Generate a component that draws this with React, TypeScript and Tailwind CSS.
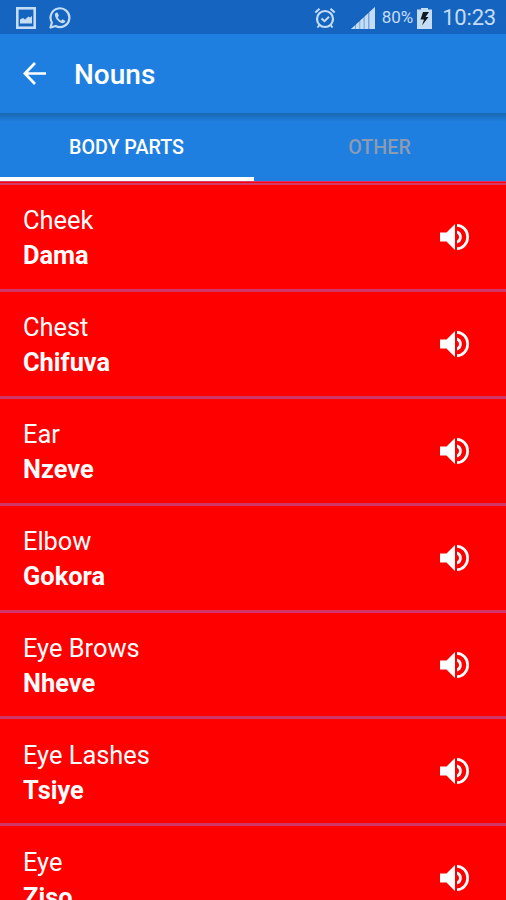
import React from 'react';

const words = [
  { english: 'Cheek', shona: 'Dama' },
  { english: 'Chest', shona: 'Chifuva' },
  { english: 'Ear', shona: 'Nzeve' },
  { english: 'Elbow', shona: 'Gokora' },
  { english: 'Eye Brows', shona: 'Nheve' },
  { english: 'Eye Lashes', shona: 'Tsiye' },
  { english: 'Eye', shona: 'Ziso' },
];

const StatusBar = () => (
  <div className="h-[34px] shrink-0 bg-[#1565c0] flex items-center pl-4 pr-[10px] pt-px text-[#c5dcf5]">
    {/* Screenshot notification */}
    <svg className="w-5 h-[22px]" viewBox="0 0 20 22" fill="none">
      <rect x="1.3" y="1.3" width="17.4" height="19.4" stroke="currentColor" strokeWidth="2.6" />
      <path d="M4 16.500v-4l3-1.500 2 1.500 3.500-3 1.500 1 2-1.500v7.500z" fill="currentColor" />
    </svg>
    {/* WhatsApp */}
    <svg className="w-[22px] h-[22px] ml-[13px]" viewBox="0 0 22 22" fill="none">
      <path
        d="M1.500 20.500l1.400-5A9.400 9.400 0 1 1 6.600 19z"
        stroke="currentColor"
        strokeWidth="2.2"
        strokeLinejoin="round"
      />
      <path
        d="M7.400 5.500c-1.200.6-1.800 1.900-1.400 3.300.8 3.500 3.400 6.200 6.900 7.400 1.700.3 3-.6 3.500-2.200l-2.900-1.700-1.400 1.400c-1.700-.8-2.700-1.900-3.400-3.500l1.200-1.400-1.300-3.100z"
        fill="currentColor"
      />
    </svg>
    {/* Alarm */}
    <svg className="w-[22px] h-[22px] ml-auto" viewBox="0 0 22 22" fill="none" stroke="currentColor">
      <circle cx="11" cy="12" r="8" strokeWidth="2.2" />
      <path
        d="M7.500 11.500l3 2.700 4.500-4.400M1.300 5.500l4.200-3.800M20.700 5.500l-4.200-3.800M5.500 18l-2 2.500M16.500 18l2 2.500"
        strokeWidth="2"
      />
    </svg>
    {/* Signal */}
    <svg className="w-6 h-[22px] ml-[15px]" viewBox="0 0 24 22" fill="currentColor">
      <path d="M0 22l24-22v22z" opacity="0.55" />
      <path d="M0 22l4-3.600V22zM5 17.400l3.300-3V22H5zM9.300 13.500l3.300-3V22H9.300zM13.700 9.500l3.300-3V22h-3.300zM18.500 5.100l5.500-5V22h-5.500z" />
    </svg>
    <span className="ml-[7px] text-[17px] leading-none">80%</span>
    {/* Battery */}
    <svg className="w-[15px] h-[22px] ml-1" viewBox="0 0 15 22">
      <path d="M4 1h7v1.500h4V22H0V2.500h4z" fill="currentColor" />
      <path d="M6 5L3.500 12.500H7L5 18.500l6.500-8.500H8.500L12 5z" fill="#101820" />
    </svg>
    <span className="ml-[10px] text-[22px] leading-none tracking-[-0.2px]">10:23</span>
  </div>
);

const VolumeIcon = () => (
  <svg className="w-[29px] h-[26px]" viewBox="0 0 29 26" fill="white">
    <path d="M0 8.500h6.500L15 0v26L6.500 17.500H0z" />
    <path d="M17 6.500a6.800 6.800 0 0 1 0 13v-3a4 4 0 0 0 0-7z" />
    <path d="M17 0a12 13 0 0 1 0 26v-2.700a9.300 10.300 0 0 0 0-20.600z" />
  </svg>
);

const App = () => {
  return (
    <div className="h-[900px] w-full overflow-hidden flex flex-col bg-[red] text-white font-[Roboto,sans-serif]">
      <StatusBar />

      <header className="h-[79px] shrink-0 bg-[#1e7fe0] flex items-center pl-[23px]">
        <svg className="w-[23px] h-[23px]" viewBox="0 0 23 23" fill="none" stroke="white" strokeWidth="2.7">
          <path d="M23 11.500H2M12 1L1.800 11.500 12 22" />
        </svg>
        <h1 className="ml-7 pt-[3px] text-[28px] leading-none font-medium">Nouns</h1>
      </header>

      {/* Tabs sit under the toolbar shadow */}
      <nav className="h-[68px] shrink-0 flex bg-[#1e7fe0] bg-linear-to-b from-[#1b67b2] to-[#1e7fe0] to-[9px] text-[19.7px] font-medium">
        <button className="w-[254px] pt-[6px] pr-px border-b-4 border-white">BODY PARTS</button>
        <button className="flex-1 pt-[6px] pb-1 pr-px text-[#8d9bb0]">OTHER</button>
      </nav>

      <div className="h-1 shrink-0 border-t border-b-2 border-[#d8386a]" />

      <ul>
        {words.map((word) => (
          <li
            key={word.english}
            className="h-[106.9px] flex items-center justify-between pl-[23px] pr-[37px] border-b-[3px] border-[#d23468]"
          >
            <div className="pt-[3px] text-[25.4px] leading-[35px]">
              <p>{word.english}</p>
              <p className="font-bold">{word.shona}</p>
            </div>
            <button aria-label="Play">
              <VolumeIcon />
            </button>
          </li>
        ))}
      </ul>
    </div>
  );
};

export default App;
